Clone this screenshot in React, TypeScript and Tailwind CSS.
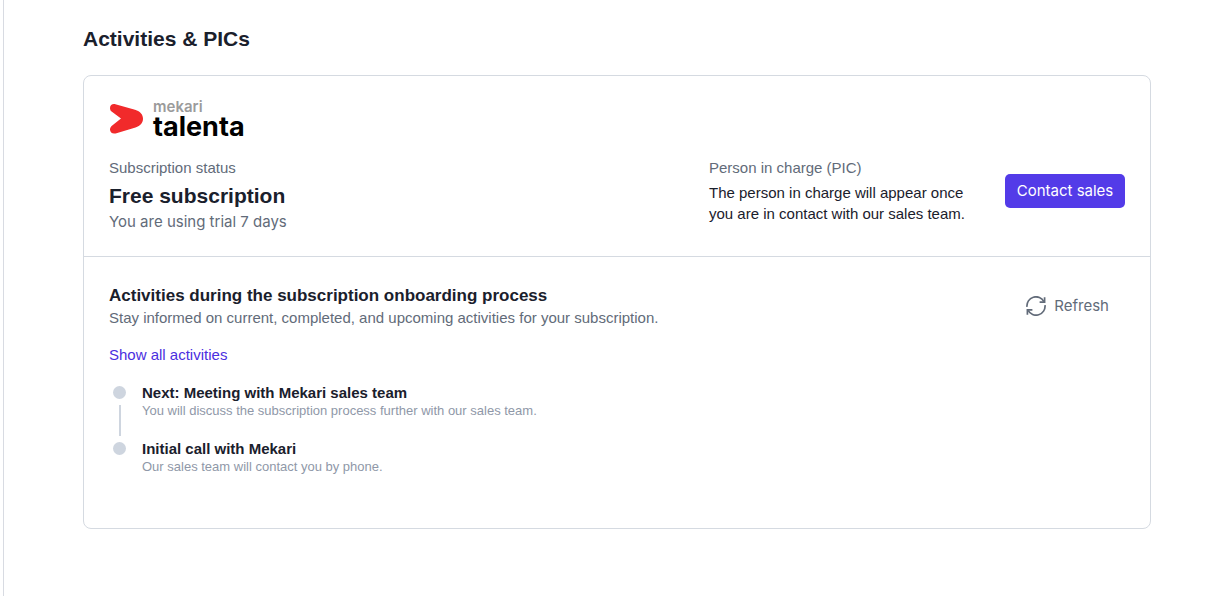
const activities = [
    {
        id: 1,
        title: 'Next: Meeting with Mekari sales team',
        description: 'You will discuss the subscription process further with our sales team.',
    },
    {
        id: 2,
        title: 'Initial call with Mekari',
        description: 'Our sales team will contact you by phone.',
    },
];

function Logo() {
    return (
        <div className="flex h-[38px] items-center gap-[10px]">
            <svg width="34" height="32" viewBox="-1 0 34 32" fill="#f12a2b" aria-hidden="true">
                <path d="M5.4 1.2 L25 6.8 C30.5 8.5 33 11.8 33 15.8 C33 19.8 30.5 22.9 25.5 24.4 L5.6 30.4 C2.4 31.2 0 29.4 0 26.6 C0 24.8 .8 23.7 1.9 22.7 L11 15.5 L1.6 8.6 C.5 7.6 0 6.4 0 4.9 C0 2 2.6 .4 5.4 1.2 Z" />
            </svg>
            <div className="font-[Inter,sans-serif]">
                <div className="text-[15px] leading-4 font-semibold text-[#9b9b9b]">mekari</div>
                <div className="text-[27px] leading-6 font-bold text-black">talenta</div>
            </div>
        </div>
    );
}

function RefreshIcon() {
    return (
        <svg width="20" height="20" viewBox="0 0 20 20" fill="none" stroke="currentColor" strokeWidth="1.7" aria-hidden="true">
            <path d="M1 10.8 A9 9 0 0 1 17.9 5.6" />
            <path d="M18.6 1.2 V6.2 H13.6" />
            <path d="M19 9.2 A9 9 0 0 1 2.1 14.4" />
            <path d="M1.4 18.8 V13.8 H6.4" />
        </svg>
    );
}

export default function App() {
    return (
        <div className="flex min-h-screen bg-white pl-[3px] font-['Liberation_Sans',Arial,sans-serif] text-[15px] text-[#1a202c]">
            <main className="flex-1 border-l border-[#d8dbe2] pt-[25px] pr-[77px] pb-10 pl-[79px]">
                <h1 className="text-[21px] leading-7 font-bold">Activities &amp; PICs</h1>

                <div className="mt-[22px] rounded-lg border border-[#d5dae1]">
                    {/* Subscription */}
                    <section className="border-b border-[#d5dae1] px-[25px] py-6">
                        <Logo />
                        <div className="mt-5 flex items-start justify-between">
                            <div>
                                <p className="leading-5 text-[#626b79]">Subscription status</p>
                                <h2 className="mt-1 text-[21px] leading-7 font-bold">Free subscription</h2>
                                <p className="mt-[2px] font-[Inter,sans-serif] leading-5 text-[#626b79]">
                                    You are using trial 7 days
                                </p>
                            </div>
                            <div className="flex items-center gap-9">
                                <div className="w-[260px]">
                                    <p className="leading-5 text-[#626b79]">Person in charge (PIC)</p>
                                    <p className="mt-1 leading-[21px]">
                                        The person in charge will appear once you are in contact with our sales team.
                                    </p>
                                </div>
                                <button className="h-[34px] w-[120px] rounded-[5px] bg-[#533be8] font-[Inter,sans-serif] text-white">
                                    Contact sales
                                </button>
                            </div>
                        </div>
                    </section>

                    {/* Activities */}
                    <section className="px-[25px] pt-[27px] pb-[52px]">
                        <div className="flex items-center justify-between">
                            <div>
                                <h2 className="text-[17px] leading-6 font-bold">
                                    Activities during the subscription onboarding process
                                </h2>
                                <p className="leading-5 text-[#626b79]">
                                    Stay informed on current, completed, and upcoming activities for your subscription.
                                </p>
                            </div>
                            <button className="flex items-center gap-2 px-4 font-[Inter,sans-serif] text-[#626b79]">
                                <RefreshIcon />
                                Refresh
                            </button>
                        </div>

                        <a href="#" className="mt-[17px] block w-fit leading-5 text-[#4b2fe0]">
                            Show all activities
                        </a>

                        <ul className="mt-[19px] pl-1">
                            {activities.map((activity) => (
                                <li key={activity.id} className="group flex gap-4 pb-5 last:pb-0">
                                    <div className="-mb-5 flex w-[13px] flex-col items-center gap-[6px] pt-[2px] pb-1 group-last:mb-0 group-last:pb-0">
                                        <span className="size-[13px] rounded-full bg-[#ced5df]" />
                                        <span className="w-[2px] flex-1 bg-[#ced5df] group-last:hidden" />
                                    </div>
                                    <div>
                                        <h3 className="leading-[18px] font-bold">{activity.title}</h3>
                                        <p className="text-[13px] leading-[18px] text-[#8f98a8]">{activity.description}</p>
                                    </div>
                                </li>
                            ))}
                        </ul>
                    </section>
                </div>
            </main>
        </div>
    );
}
